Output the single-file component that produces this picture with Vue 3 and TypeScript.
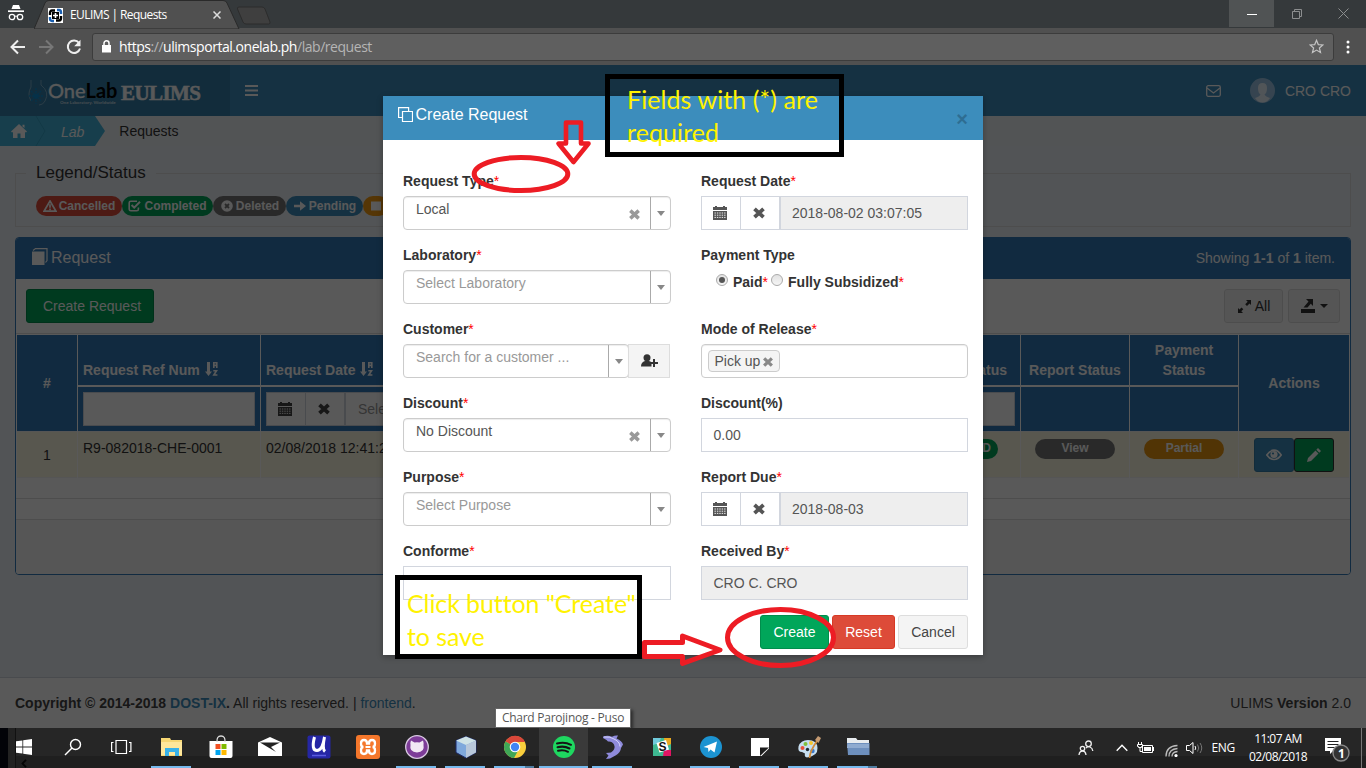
<script setup lang="ts">
interface Field {
  label: string
  req?: boolean
  kind: 'select' | 'date' | 'radio' | 'tags' | 'input'
  value?: string
  placeholder?: string
  clearable?: boolean
  addon?: boolean
  disabled?: boolean
}

const leftFields: Field[] = [
  { label: 'Request Type', req: true, kind: 'select', value: 'Local', clearable: true },
  { label: 'Laboratory', req: true, kind: 'select', placeholder: 'Select Laboratory' },
  { label: 'Customer', req: true, kind: 'select', placeholder: 'Search for a customer ...', addon: true },
  { label: 'Discount', req: true, kind: 'select', value: 'No Discount', clearable: true },
  { label: 'Purpose', req: true, kind: 'select', placeholder: 'Select Purpose' },
  { label: 'Conforme', req: true, kind: 'input', value: '' },
]
const rightFields: Field[] = [
  { label: 'Request Date', req: true, kind: 'date', value: '2018-08-02 03:07:05' },
  { label: 'Payment Type', kind: 'radio' },
  { label: 'Mode of Release', req: true, kind: 'tags', value: 'Pick up' },
  { label: 'Discount(%)', kind: 'input', value: '0.00' },
  { label: 'Report Due', req: true, kind: 'date', value: '2018-08-03' },
  { label: 'Received By', req: true, kind: 'input', value: 'CRO C. CRO', disabled: true },
]
const columns = [leftFields, rightFields]

const legend = [
  { name: 'Cancelled', icon: 'warn', color: '#dd4b39', w: 86 },
  { name: 'Completed', icon: 'check', color: '#00a65a', w: 91 },
  { name: 'Deleted', icon: 'xcircle', color: '#777777', w: 73 },
  { name: 'Pending', icon: 'arrow', color: '#3c8dbc', w: 77 },
  { name: '', icon: 'square', color: '#f39c12', w: 26 },
]

const apps = [
  { id: 'start' }, { id: 'search' }, { id: 'taskview' },
  { id: 'explorer', run: true }, { id: 'store' }, { id: 'mail' }, { id: 'udemy' }, { id: 'xampp' },
  { id: 'github', run: true }, { id: 'cube', run: true }, { id: 'chrome', run: true, multi: true },
  { id: 'spotify', run: true, hot: true }, { id: 'dolphin', run: true }, { id: 'slack' },
  { id: 'telegram', run: true }, { id: 'sticky', run: true }, { id: 'paint', run: true },
  { id: 'folder', run: true, multi: true },
]
</script>

<template>
  <div class="screen">
    <svg class="defs" width="0" height="0">
      <symbol id="i-cal" viewBox="0 0 14 14"><path d="M0 1h2V0h2v1h6V0h2v1h2v3H0zM0 5h14v9H0z" fill="currentColor" /><path d="M1.5 7h11M1.5 9.2h11M1.5 11.4h11" stroke="#fff" stroke-width=".9" stroke-dasharray="1.4 1" /></symbol>
      <symbol id="i-x" viewBox="0 0 14 14"><path d="M2.5 2.8l9 8.4M11.5 2.8l-9 8.4" stroke="currentColor" stroke-width="3.8" /></symbol>
      <symbol id="i-warn" viewBox="0 0 14 12"><path d="M7 1L13 11.2H1z" fill="none" stroke="currentColor" stroke-width="1.7" /><path d="M7 4.2v3.6M7 8.6v1.6" stroke="currentColor" stroke-width="1.7" /></symbol>
      <symbol id="i-check" viewBox="0 0 14 12"><path d="M9 1.2H2.8Q1.2 1.2 1.2 2.8v6.4Q1.2 10.8 2.8 10.8h6Q10.4 10.8 10.4 9.2V7.5" fill="none" stroke="currentColor" stroke-width="1.6" /><path d="M3.6 5l2.6 2.6L12 1.8" fill="none" stroke="currentColor" stroke-width="2" /></symbol>
      <symbol id="i-xcircle" viewBox="0 0 12 12"><circle cx="6" cy="6" r="5.8" fill="currentColor" /><path d="M4 4l4 4M8 4L4 8" stroke="#777" stroke-width="1.8" /></symbol>
      <symbol id="i-arrow" viewBox="0 0 12 12"><path d="M0 4.8h6V1.2L12 6l-6 4.8V7.2H0z" fill="currentColor" /></symbol>
      <symbol id="i-square" viewBox="0 0 10 12"><path d="M0 1.500h10v9H0z" fill="currentColor" /></symbol>
      <symbol id="i-sort" viewBox="0 0 14 16"><path d="M2 1h3v9.500h2L3.500 15 0 10.500h2z" fill="currentColor" /><path d="M8.800 7V1.700h3V7M8.800 4.400h3M8.300 9.700h3.200L8.800 14h3.600" fill="none" stroke="currentColor" stroke-width="1.600" /></symbol>
    </svg>

    <header class="browser">
      <div class="strip">
        <svg class="incog" width="18" height="18" viewBox="0 0 18 18" fill="none" stroke="#fff"><path d="M4.500 5L6 1h6l1.500 4z" fill="#fff" stroke="none" /><path d="M1 7.200h16" stroke-width="1.700" /><circle cx="5" cy="13" r="2.700" stroke-width="1.300" /><circle cx="13" cy="13" r="2.700" stroke-width="1.300" /><path d="M7.500 12.500q1.500-1 3 0" /></svg>
        <div class="tab">
          <svg class="tabbg" width="206" height="29" viewBox="0 0 206 29"><path d="M0 29L11 3Q12 .5 15 .5H189Q192 .5 193 3L205 29z" fill="#505050" stroke="#2a2a2a" /></svg>
          <svg class="fav" width="15" height="15" viewBox="0 0 15 15"><path d="M0 0h15v15H0z" fill="#fff" /><g fill="none" stroke-width="2.400"><path d="M7 2.500H4Q2 2.500 2 5v2" stroke="#000" /><path d="M8 12.500h3q2 0 2-2.500V8" stroke="#000" /><path d="M9 2h2q2 0 2 2.500V6" stroke="#1b5fb0" /><path d="M6 13H4q-2 0-2-2.500V9" stroke="#1b5fb0" /></g><path d="M4 4h7v7H4z" /><path d="M7.500 5v5M5 7.500h5" stroke="#fff" stroke-width="1.600" /></svg>
          <span class="tabname">EULIMS | Requests</span>
          <svg class="tabx" width="8" height="8" viewBox="0 0 8 8"><path d="M.5.5l7 7M7.500.5l-7 7" stroke="#ddd" stroke-width="1.500" /></svg>
        </div>
        <svg class="newtab" width="36" height="19" viewBox="0 0 36 19"><path d="M3 1h23q2 0 3 2l5 13q.5 2-1.500 2H10q-2 0-3-2L1.500 3Q1 1 3 1z" fill="#3f3f3f" stroke="#2c2c2c" /></svg>
        <div class="winbtns">
          <span class="min"><svg width="10" height="10"><path d="M0 5.500h10" stroke="#fff" /></svg></span>
          <span><svg width="10" height="10" fill="none" stroke="#8c8e8f"><path d="M.5 2.500h7v7h-7zM2.500 2.500v-2h7v7h-2" /></svg></span>
          <span><svg width="11" height="11" stroke="#8c8e8f"><path d="M.5.5l10 10M10.500.5l-10 10" /></svg></span>
        </div>
      </div>
      <div class="nav">
        <svg width="16" height="16" viewBox="0 0 16 16" fill="none" stroke="#eee" stroke-width="2"><path d="M15 8H2M8 1.500L1.500 8 8 14.500" /></svg>
        <svg width="16" height="16" viewBox="0 0 16 16" fill="none" stroke="#777" stroke-width="2"><path d="M1 8h13M8 1.500L14.500 8 8 14.500" /></svg>
        <svg width="16" height="16" viewBox="0 0 16 16"><path d="M13 4A6.200 6.200 0 1 0 14 9.500" fill="none" stroke="#eee" stroke-width="2" /><path d="M14.500.8v6.400H8.200z" fill="#eee" /></svg>
        <div class="omni">
          <svg width="9" height="13" viewBox="0 0 9 13"><path d="M0 5h9v7.500H0z" fill="#fff" /><path d="M2 5.500V3.300a2.500 2.500 0 0 1 5 0v2.200" fill="none" stroke="#fff" stroke-width="1.500" /></svg>
          <span class="url"><b>https</b>://<b>ulimsportal.onelab.ph</b>/lab/request</span>
          <svg class="star" width="15" height="15" viewBox="0 0 15 15"><path d="M7.500 1.300l1.800 4.300 4.600.4-3.500 3 1.100 4.500-4-2.400-4 2.400 1.100-4.500-3.500-3 4.600-.4z" fill="none" stroke="#c4c4c4" stroke-width="1.200" /></svg>
        </div>
        <svg class="dots" width="4" height="14" fill="#fff"><circle cx="2" cy="2" r="1.500" /><circle cx="2" cy="7" r="1.500" /><circle cx="2" cy="12" r="1.500" /></svg>
      </div>
    </header>

    <main class="app">
      <div class="topbar">
        <div class="brand">
          <svg width="20" height="28" viewBox="0 0 20 28" fill="none" stroke="#8bb7d1"><path d="M3 1v7Q-1 15 3 22M13 1v5Q22 13 17 22q-2 4-6 4" stroke-width=".8" /><path d="M8 9v16M1 17h14M3 12l10 10M13 12L3 22" stroke="#0f8ed0" stroke-dasharray="2 1" stroke-width="1.300" /><circle cx="8" cy="17" r="2.500" fill="#0f8ed0" stroke="none" /></svg>
          <div class="onelab"><div class="ol">One<i>Lab</i></div><small>One Laboratory. Worldwide</small></div>
          <span class="eulims">EULIMS</span>
        </div>
        <svg class="burger" width="13" height="11"><path d="M0 1h13M0 5.500h13M0 10h13" stroke="#fff" stroke-width="1.800" /></svg>
        <div class="user">
          <svg width="15" height="12" viewBox="0 0 15 12" fill="none" stroke="#fff" stroke-width="1.300"><rect x=".7" y=".7" width="13.600" height="10.600" rx="1.500" /><path d="M1 3l6.500 5L14 3" /></svg>
          <svg class="ava" width="25" height="25" viewBox="0 0 25 25"><circle cx="12.500" cy="12.500" r="12.500" fill="#9cc4e4" /><path d="M12.500 5q4.500 0 4.500 5t-2.500 6.500q1 2 5.500 3.500-3 4.500-7.500 4.500T5 20q4.500-1.500 5.500-3.500Q8 15 8 10t4.500-5z" fill="#e9f3fb" /></svg>
          <span>CRO CRO</span>
        </div>
      </div>
      <div class="crumbs">
        <svg class="crumbbg" width="106" height="30"><path d="M0 0h95l10 15-10 15H0z" fill="#44b3d9" /><path d="M36 0l9 15-9 15" fill="none" stroke="#35a0c6" /></svg>
        <svg class="home" width="16" height="14" viewBox="0 0 16 14"><path d="M8 0l8 7.500-1 1L14 8v6H9.500V9.500h-3V14H2V8l-1 .5-1-1zM11.500.8h2V4l-2-1.500z" fill="#fff" /></svg>
        <em>Lab</em><span>Requests</span>
      </div>

      <fieldset class="legend">
        <legend>Legend/Status</legend>
        <div class="pills">
          <span v-for="l in legend" :key="l.icon" class="pill" :style="{ background: l.color, width: l.w + 'px' }">
            <svg width="14" height="12"><use :href="'#i-' + l.icon" /></svg>{{ l.name }}
          </span>
        </div>
      </fieldset>

      <section class="panel">
        <div class="phead">
          <svg width="16" height="17" viewBox="0 0 16 17"><path d="M0 3.500h12.500V17H0z" fill="#fff" /><path d="M1 2.500L3.500.6H15v12L13.500 14.500" fill="none" stroke="#fff" stroke-width="1.200" /></svg>
          <span class="ptitle">Request</span>
          <span class="showing">Showing <b>1-1</b> of <b>1</b> item.</span>
        </div>
        <div class="ptools">
          <button class="btn green wide">Create Request</button>
          <div class="grow"></div>
          <button class="btn gray all"><svg width="15" height="15" viewBox="0 0 15 15"><path d="M9 1h5v5l-1.500-1.500L10 7 8.200 5.200l2.500-2.500zM1 14V9l1.500 1.500L4.500 8.500l1.800 1.800-2 2L6 14z" fill="#333" /></svg>All</button>
          <button class="btn gray exp"><svg width="14" height="14" viewBox="0 0 14 14"><path d="M0 10h14v4H0z" fill="#333" /><path d="M5 0h7v7L9.800 4.800 6.500 8.500H2.500L7.500 2.500z" fill="#333" /></svg><i class="caret"></i></button>
        </div>
        <div class="table">
          <div class="th span">#</div>
          <div class="th left">Request Ref Num <svg width="14" height="16"><use href="#i-sort" /></svg></div>
          <div class="th left">Request Date <svg width="14" height="16"><use href="#i-sort" /></svg></div>
          <div class="th"></div>
          <div class="th right">Status</div>
          <div class="th">Report Status</div>
          <div class="th">Payment<br>Status</div>
          <div class="th span">Actions</div>
          <div class="tf"><div class="box"></div></div>
          <div class="tf"><div class="dategroup"><span class="cell"><svg width="14" height="14"><use href="#i-cal" /></svg></span><span class="cell"><svg width="14" height="14"><use href="#i-x" /></svg></span><span class="val">Sele</span></div></div>
          <div class="tf"><div class="box"></div></div>
          <div class="tf"><div class="box"></div></div>
          <div class="tf"></div>
          <div class="tf"></div>
          <div class="td mid">1</div>
          <div class="td">R9-082018-CHE-0001</div>
          <div class="td">02/08/2018 12:41:2</div>
          <div class="td"></div>
          <div class="td paid"><span class="badge g">D</span></div>
          <div class="td c"><span class="badge">View</span></div>
          <div class="td c"><span class="badge o">Partial</span></div>
          <div class="td acts">
            <span class="act blue"><svg width="16" height="12" viewBox="0 0 16 12"><path d="M.8 6Q4 1.200 8 1.200T15.200 6Q12 10.500 8 10.500T.8 6z" fill="none" stroke="#fff" stroke-width="1.700" /><circle cx="8" cy="5.500" r="3.600" fill="#fff" /><circle cx="7" cy="4.500" r="1.100" fill="#3c8dbc" /></svg></span>
            <span class="act green"><svg width="14" height="14" viewBox="0 0 14 14"><path d="M0 14l1-4 7.500-7.500 3 3L4 13zM9.300 1.700L11 0l3 3-1.700 1.700z" fill="#fff" /></svg></span>
          </div>
        </div>
        <div class="blank"></div>
        <div class="blank"></div>
        <div class="pfoot"></div>
      </section>

      <footer class="foot">
        <span><b>Copyright © 2014-2018 <a>DOST-IX</a>.</b> All rights reserved. | <a>frontend</a>.</span>
        <span>ULIMS <b>Version</b> 2.0</span>
      </footer>
      <div class="backdrop"></div>
    </main>

    <div class="modal">
      <div class="mhead">
        <svg width="15" height="15" viewBox="0 0 15 15" fill="none" stroke="#fff" stroke-width="1.200"><path d="M4.500 4.500h10v10h-10zM4 10.500H.6V.6h10V4" /></svg>
        <span>Create Request</span>
        <b class="close">×</b>
      </div>
      <div class="mbody">
        <div v-for="(col, ci) in columns" :key="ci" class="mcol">
          <div v-for="f in col" :key="f.label" class="field">
            <label>{{ f.label }}<i v-if="f.req">*</i></label>
            <div v-if="f.kind === 'select'" class="selrow">
              <div class="select">
                <span class="sv" :class="{ ph: f.placeholder }">{{ f.value || f.placeholder }}</span>
                <svg v-if="f.clearable" class="clr" width="13" height="13"><use href="#i-x" /></svg>
                <span class="drop"><i></i></span>
              </div>
              <div v-if="f.addon" class="addon"><svg width="17" height="14" viewBox="0 0 17 14"><circle cx="6" cy="3.800" r="3.500" fill="#333" /><path d="M0 12.500q0-4.500 4-5.500h4q2.500.8 2.500 1.800V12.500z" fill="#333" /><path d="M13 5v8M9.500 9H17" stroke="#333" stroke-width="2" /></svg></div>
            </div>
            <div v-else-if="f.kind === 'date'" class="dategroup">
              <span class="cell"><svg width="14" height="14"><use href="#i-cal" /></svg></span>
              <span class="cell"><svg width="14" height="14"><use href="#i-x" /></svg></span>
              <span class="val dis">{{ f.value }}</span>
            </div>
            <div v-else-if="f.kind === 'radio'" class="radios">
              <span class="radio on"></span><b>Paid<i>*</i></b><span class="radio"></span><b class="fs">Fully Subsidized<i>*</i></b>
            </div>
            <div v-else-if="f.kind === 'tags'" class="tags"><span class="tag">{{ f.value }}<svg width="12" height="12"><use href="#i-x" /></svg></span></div>
            <div v-else class="input" :class="{ dis: f.disabled }">{{ f.value }}</div>
          </div>
        </div>
      </div>
      <div class="mfoot">
        <button class="btn green">Create</button>
        <button class="btn red">Reset</button>
        <button class="btn gray">Cancel</button>
      </div>
    </div>

    <svg class="marks" width="1366" height="768" fill="none" stroke="#ed1c24" stroke-width="5" stroke-linejoin="round">
      <path d="M566 122.500H581V143.500H588.500L573.500 162 558.500 143.500H566z" stroke-width="4.600" />
      <ellipse cx="521" cy="174" rx="46.800" ry="16.500" />
      <path d="M644.500 642.500H682.500V636L720 650 682.500 663.500V656.500H644.500z" />
      <ellipse cx="780.500" cy="637.500" rx="53" ry="28" />
    </svg>
    <div class="note n1">Fields with (*) are<br>required</div>
    <div class="note n2">Click button "Create"<br>to save</div>

    <div class="tooltip">Chard Parojinog - Puso</div>

    <div class="taskbar">
      <span class="edge"></span>
      <svg class="scroll" width="6" height="9" viewBox="0 0 6 9"><path d="M5 .8L1.500 4.500 5 8.200" fill="none" stroke="#050505" stroke-width="1.800" /></svg>
      <div class="apps">
        <div v-for="a in apps" :key="a.id" class="appi" :class="[a.id, { run: a.run, hot: a.hot, multi: a.multi }]">
          <svg width="24" height="24" viewBox="0 0 24 24">
            <g v-if="a.id === 'start'" fill="#fff"><path d="M4 6.300l6.400-.9v6.200H4zM11.200 5.300L20 4v7.600h-8.800zM4 12.400h6.400v6.200L4 17.700zM11.200 12.400H20V20l-8.800-1.300z" /></g>
            <g v-else-if="a.id === 'search'" fill="none" stroke="#fff" stroke-width="1.400"><circle cx="14.500" cy="9.500" r="5" /><path d="M11 13l-7 7" /></g>
            <g v-else-if="a.id === 'taskview'" fill="none" stroke="#fff" stroke-width="1.200"><path d="M6 5.500h10.500v13H6zM3.500 7.500H1.600v9h1.900M19 7.500h1.900v9H19" /></g>
            <g v-else-if="a.id === 'explorer'"><path d="M1 3h9l1 2h11v16H1z" fill="#f7d774" /><path d="M1 7h21v13H1z" fill="#ffe79b" /><path d="M5 13h14v8h-4v-4H9v4H5z" fill="#39b2e9" /></g>
            <g v-else-if="a.id === 'store'"><path d="M.5 6h23v15q0 2-2 2h-19q-2 0-2-2z" fill="#fff" /><path d="M8 7q-.5-6 4-6t4 6" fill="none" stroke="#ddd" stroke-width="1.300" /><path d="M6.500 9h5v5h-5z" fill="#f25022" /><path d="M12.500 9h5v5h-5z" fill="#7fba00" /><path d="M6.500 15h5v5h-5z" fill="#00a4ef" /><path d="M12.500 15h5v5h-5z" fill="#ffb900" /></g>
            <g v-else-if="a.id === 'mail'"><path d="M0 7.500L12 2l12 5.500V21H0z" fill="#fff" /><path d="M2 7.500h20L13 12l5 5z" fill="#222" /></g>
            <g v-else-if="a.id === 'udemy'"><rect x=".5" y=".5" width="23" height="23" rx="2" fill="#2526a4" /><path d="M7.500 2Q4 15.500 10 15.500 15.500 15.500 17.500 2M17.500 2q-2.500 12 .5 14.500" fill="none" stroke="#fff" stroke-width="3" /><path d="M5 20.500h14" stroke="#5b5ce0" stroke-width="1.500" /></g>
            <g v-else-if="a.id === 'xampp'"><rect width="24" height="24" rx="3" fill="#f5772b" /><path d="M8 5q3 0 3 3.500h2Q13 5 16 5t3 3.500-2.500 3.500Q19 12 19 15.500T16 19t-3-3.500h-2Q11 19 8 19t-3-3.500T7.500 12Q5 12 5 8.500T8 5z" fill="none" stroke="#fff" stroke-width="2.300" /><path d="M9.500 12h5" stroke="#fff" stroke-width="2" /></g>
            <g v-else-if="a.id === 'github'"><circle cx="12" cy="12" r="11.300" fill="#7d3c98" stroke="#d9c9e2" stroke-width="1.300" /><path d="M6 5.500l3.500 2q2.500-.5 5 0l3.500-2q1 3 .5 4.500 1.500 7-6.500 7.500-8-.5-6.500-7.500Q5 8 6 5.500z" fill="#f2e8f4" /></g>
            <g v-else-if="a.id === 'cube'"><path d="M12 1.500l10 4v12L12 23 2 17.500v-12z" fill="#7fa9dc" stroke="#1d2b6b" /><path d="M12 1.500l10 4-10 4.500L2 5.500z" fill="#cfe3e6" /><path d="M12 10l10-4.500v12L12 23z" fill="#b8c8da" /></g>
            <g v-else-if="a.id === 'chrome'"><circle cx="12" cy="12" r="11" fill="#f9ce3c" /><path d="M12 12L2.500 6.500A11 11 0 0 1 22 7H12z" fill="#d9473a" /><path d="M12 12L2.500 6.500A11 11 0 0 0 11 23l5-9z" fill="#3fa757" /><circle cx="12" cy="12" r="5.300" fill="#fff" /><circle cx="12" cy="12" r="4.200" fill="#4285f4" /></g>
            <g v-else-if="a.id === 'spotify'"><circle cx="12" cy="12" r="11" fill="#1ed760" /><path d="M5 8.500q7.500-2.200 14 1.300M5.500 12.300q6.500-1.800 12 1.200M6 15.800q5.500-1.500 10 1" fill="none" stroke="#151515" stroke-width="2" stroke-linecap="round" /></g>
            <g v-else-if="a.id === 'dolphin'"><path d="M2 1.500q5-1.500 9 .3Q14 0 17 .5l-1.500 3Q21 6 22 9.500L20 13q-.5 5-5.500 7.500L9 23.500l-4 .5 2.500-3.500L5 18l5-.5q5-3.500 3-8Q11 6 7 6.500L5.500 5 2 3z" fill="#8f8bdc" /><path d="M3 2q6-.5 9 1.500 7 3 7 8" fill="none" stroke="#d5d5fa" /></g>
            <g v-else-if="a.id === 'slack'"><path d="M3 3h18v18H3z" fill="#3eb991" /><path d="M14 3h7v6l-6 3z" fill="#e9a820" /><path d="M21 15v6h-8l1-6z" fill="#e01563" /><path d="M3 3h8l-2 5-6 2z" fill="#70cadb" /><path d="M6.500 8l9.500-3 3 9.500-9.500 3z" fill="#fff" /><text x="8.500" y="16" font-size="12" font-weight="bold" font-family="Liberation Sans, sans-serif" fill="#111">S</text></g>
            <g v-else-if="a.id === 'telegram'"><circle cx="12" cy="12" r="11" fill="#1c93d1" /><path d="M4.500 12L18 6.500l-2.500 11-4-3-2 2.500-.5-4z" fill="#fff" /></g>
            <g v-else-if="a.id === 'sticky'"><path d="M3 3h18v18H3z" fill="#fff" /><path d="M12 12.500h9L12 21z" fill="#1d1d1d" /><path d="M13.500 21L21 13.500V21z" fill="#262626" /></g>
            <g v-else-if="a.id === 'paint'"><path d="M11 5q9 0 9.500 8T10 22.500Q7 22 8 18.500L5 17Q.5 17 1.500 11.500 3.500 5 11 5z" fill="#c6def0" /><circle cx="5.500" cy="13" r="2" fill="#e9503b" /><circle cx="8.500" cy="9" r="2" fill="#7fbf3c" /><circle cx="14" cy="8" r="2" fill="#f5c52e" /><circle cx="15.500" cy="16" r="2.200" fill="#3b78c8" /><circle cx="10.500" cy="14.500" r="1.700" fill="#1f2a33" /><path d="M12.500 23Q13 16 20 6" stroke="#d08b3c" stroke-width="1.800" fill="none" /><path d="M18 5l3-4 3 2-2.500 5z" fill="#c49a72" /></g>
            <g v-else><path d="M1 3h9l1.500 2H23v8H1z" fill="#e8ecef" /><path d="M1 8h22.500v12H2z" fill="#6d8fbd" /><path d="M2 9h21v4H2z" fill="#8fabd0" /></g>
          </svg>
        </div>
      </div>
      <div class="tray">
        <svg class="t1" width="16" height="16" viewBox="0 0 16 16" fill="none" stroke="#eee" stroke-width="1.300"><circle cx="10.500" cy="3.800" r="2.800" /><circle cx="4.500" cy="8.500" r="2.200" /><path d="M1 15q.5-4 3.500-4T8 15M8 8q2-2 4-1 2.500 1 2.800 4" /></svg>
        <svg class="t2" width="12" height="8" fill="none" stroke="#fff" stroke-width="1.400"><path d="M.7 6.800L6 1.200l5.300 5.600" /></svg>
        <svg class="t3" width="17" height="12" viewBox="0 0 17 12" fill="none" stroke="#fff"><path d="M5.500 3.500h10v7h-10z" /><path d="M7 5h7v4H7z" fill="#fff" stroke="none" /><path d="M16.500 5v4M1.500 0v2M4.500 0v2M.5 2.500h5v2h-1v1h-3v-1h-1zM3 6v3.500h2" /></svg>
        <svg class="t4" width="13" height="13" viewBox="0 0 13 13" fill="none" stroke="#bbb" stroke-width="1.300"><path d="M1 12.500Q1 2 12.500 1.500M4 12.500Q4 5 12.500 4.500M7 12.500Q7 8 12.500 7.500" /><circle cx="11" cy="11.500" r="1.600" fill="#fff" stroke="none" /></svg>
        <svg class="t5" width="17" height="14" viewBox="0 0 17 14" fill="none" stroke="#fff"><path d="M.5 4.500h3l3.500-3v11l-3.500-3h-3zM9 5q1.500 2 0 4" /><path d="M11.500 3.500q2.500 3.500 0 7M14 2q3.500 5 0 10" stroke="#777" /></svg>
        <span class="eng">ENG</span>
        <div class="clock"><span>11:07 AM</span><span>02/08/2018</span></div>
        <svg class="act-c" width="26" height="26" viewBox="0 0 26 26"><path d="M1 1h16v13H9l-3 3v-3H1z" fill="#fff" /><path d="M3.500 4.500h11M3.500 7.500h11M3.500 10.500h7" stroke="#222" /><circle cx="17" cy="16" r="8" fill="#333" stroke="#888" stroke-width="1.400" /><text x="14" y="20.500" font-size="12" font-weight="bold" font-family="Open Sans, sans-serif" fill="#fff">1</text></svg>
      </div>
      <span class="peek"></span>
    </div>
  </div>
</template>

<style>
body { margin: 0; overflow: hidden; }
</style>

<style scoped>
* { box-sizing: border-box; }
.screen { position: relative; width: 1366px; height: 768px; overflow: hidden; font: 14px/20px "Liberation Sans", Arial, sans-serif; color: #333; background: #505050; display: flex; flex-direction: column; }
.defs { position: absolute; }
svg { display: block; flex: none; }
button { font: inherit; margin: 0; }

.browser { height: 65px; flex: none; font-family: "Open Sans", "Noto Sans", sans-serif; }
.strip { height: 28px; background: #35393b; display: flex; align-items: flex-start; }
.incog { margin: 4px 0 0 7px; }
.tab { position: relative; width: 206px; height: 28px; margin-left: 9px; display: flex; align-items: center; padding: 2px 0 0 14px; color: #fff; }
.tabbg { position: absolute; left: 0; top: 0; }
.fav, .tabname, .tabx { position: relative; }
.tabname { margin-left: 7px; font-size: 12px; letter-spacing: -.58px; width: 143px; white-space: nowrap; }
.newtab { margin: 6px 0 0 -4px; }
.winbtns { margin-left: auto; display: flex; }
.winbtns span { width: 46px; height: 27px; display: flex; align-items: center; justify-content: center; }
.winbtns span.min { background: #505354; width: 45px; }
.nav { height: 37px; background: #505050; display: flex; align-items: center; padding: 0 16px 0 10px; gap: 12px; }
.omni { flex: 1; margin-left: -2px; height: 28px; background: #5f5f5f; border: 1px solid #3c3c3c; border-radius: 3px; display: flex; align-items: center; padding: 0 9px 0 9px; }
.url { margin-left: 8px; color: #b5b5b5; font-size: 14px; letter-spacing: -.46px; }
.url b { font-weight: 400; color: #fff; }
.star { margin-left: auto; }

.app { position: relative; height: 663px; flex: none; background: #ecf0f5; display: flex; flex-direction: column; }
.backdrop { position: absolute; inset: 0; background: rgba(0, 0, 0, .65); }
.topbar { height: 51px; background: #3c8dbc; display: flex; align-items: center; flex: none; color: #fff; }
.brand { width: 230px; height: 51px; background: #367fa9; display: flex; align-items: center; padding: 4px 0 0 28px; }
.onelab { width: 70px; }
.ol { font: 400 20px/20px Lato, sans-serif; white-space: nowrap; -webkit-text-stroke: .3px #fff; }
.ol i { font-style: normal; font-weight: 700; color: #000; -webkit-text-stroke: 0; }
.onelab small { display: block; font: 700 4.5px/6px Lato, sans-serif; margin-left: 12px; white-space: nowrap; opacity: .7; }
.eulims { font: 700 21px/24px "Liberation Serif", serif; margin-left: 3px; letter-spacing: -.6px; -webkit-text-stroke: .5px #fff; }
.burger { margin-left: 15px; }
.user { margin-left: auto; display: flex; align-items: center; padding-right: 15px; }
.ava { margin: 0 10px 0 29px; }
.crumbs { height: 30px; position: relative; display: flex; align-items: center; background: #eceff2; flex: none; }
.crumbbg { position: absolute; left: 0; top: 0; }
.home { position: relative; margin-left: 11px; }
.crumbs em { position: relative; color: #fff; margin-left: 34px; padding-top: 1px; }
.crumbs span { margin-left: 35px; color: #333; }

.legend { margin: 17px 15px 0; padding: 0 20px; border: 1px solid #ddd; height: 64px; flex: none; min-width: 0; }
.legend legend { font-size: 17px; line-height: 20px; padding: 0 10px; margin-left: -10px; }
.pills { display: flex; margin-top: 13px; }
.pill { height: 20px; border-radius: 10px; color: #fff; font: 700 12px/20px "Liberation Sans", sans-serif; display: flex; align-items: center; gap: 2px; justify-content: center; }

.panel { margin: 10px 15px 0; height: 338px; border: 1px solid #337ab7; border-radius: 4px; background: #fff; flex: none; overflow: hidden; }
.phead { height: 41px; background: #337ab7; color: #fff; display: flex; align-items: center; padding: 0 15px 1px 16px; }
.phead svg { margin-top: -3px; }
.ptitle { font-size: 16px; margin-left: 3px; }
.showing { margin-left: auto; }
.ptools { height: 55px; display: flex; align-items: flex-start; padding: 10px 10px 0; border-bottom: 1px solid #ddd; }
.grow { flex: 1; }
.btn { height: 34px; border: 1px solid; border-radius: 3px; padding: 0 12px; font-size: 14px; display: flex; align-items: center; justify-content: center; color: #fff; white-space: nowrap; }
.green { background: #00a65a; border-color: #008d4c; }
.red { background: #dd4b39; border-color: #d73925; }
.gray { background: #f4f4f4; border-color: #ddd; color: #444; }
.wide { width: 128px; padding-left: 16px; }
.all { width: 59px; padding: 0; gap: 3px; margin-right: 5px; color: #333; }
.exp { width: 52px; padding: 0; gap: 5px; }
.caret { border: 4px solid transparent; border-top-color: #333; border-bottom: 0; }
.table { display: grid; grid-template-columns: 60px 182px 239px 399px 119px 108px 108px 110px; grid-template-rows: 50px 46px 47px; column-gap: 1px; padding: 1px 0 0 1px; background: #fff; color: #333; }
.th { background: #337ab7; color: #fff; font-weight: 700; display: flex; align-items: flex-end; justify-content: center; padding: 5px; text-align: center; }
.th.span { grid-row: span 2; align-items: center; padding: 0 5px 1px; }
.th.left { justify-content: flex-start; }
.th.right { justify-content: flex-end; padding-right: 13px; }
.th svg { margin: 0 0 3px 5px; }
.tf { background: #337ab7; border-top: 2px solid #fff; padding: 5px; height: 46px; }
.box { height: 34px; background: #fff; border: 1px solid #d2d6de; }
.dategroup { display: flex; height: 34px; border: 1px solid #d2d6de; background: #fff; }
.dategroup .cell { width: 39px; border-right: 1px solid #d2d6de; display: flex; align-items: center; justify-content: center; color: #555; padding-right: 2px; }
.tf .cell { color: #444; }
.dategroup .val { flex: 1; padding: 0 11px; line-height: 33px; color: #999; border-left: 1px solid #d2d6de; }
.tf .val { padding-left: 12px; }
.dategroup .dis { background: #eee; color: #555; }
.td { background: #fcf8e3; padding: 6px 5px; border-top: 1px solid #f4f4f4; border-bottom: 1px solid #f4f4f4; white-space: nowrap; }
.td.mid { display: flex; align-items: center; justify-content: center; padding-top: 7px; }
.td.c { display: flex; justify-content: center; padding-top: 7px; }
.td.paid { display: flex; justify-content: flex-end; padding: 7px 22px 0 0; }
.badge { width: 80px; height: 20px; border-radius: 10px; background: #777; color: #fff; font: 700 12px/18px "Liberation Sans", sans-serif; text-align: center; }
.badge.g { background: #00a65a; text-align: right; padding-right: 7px; }
.badge.o { background: #e8940f; }
.acts { display: flex; justify-content: center; padding: 6px 0; }
.act { width: 40px; height: 34px; border-radius: 3px; display: flex; align-items: center; justify-content: center; border: 1px solid; }
.act.blue { background: #3c8dbc; border-color: #367fa9; }
.blank { height: 21px; border-bottom: 1px solid #ddd; }
.pfoot { height: 60px; background: #f7f7f7; }
.foot { position: absolute; left: 0; right: 0; bottom: 0; height: 51px; background: #fff; border-top: 1px solid #d2d6de; padding: 0 15px; display: flex; justify-content: space-between; align-items: center; color: #444; }
.foot a { color: #3c8dbc; }

.modal { position: absolute; left: 383px; top: 96px; width: 600px; height: 559px; background: #fff; box-shadow: 0 2px 6px rgba(0, 0, 0, .3); }
.mhead { height: 44px; background: #3c8dbc; color: #fff; font-size: 16px; display: flex; align-items: center; padding: 0 15px 7px; gap: 2.5px; }
.close { margin-left: auto; font-size: 20px; line-height: 20px; opacity: .22; color: #000; padding-top: 9px; }
.mbody { display: flex; gap: 30px; padding: 31px 15px 0 20px; }
.mcol { width: 268px; }
.mcol + .mcol { width: 267px; }
.field { height: 74px; }
.field label { display: block; font-weight: 700; height: 25px; line-height: 20px; }
.field i { color: #f00; font-style: normal; font-weight: 400; }
.selrow { display: flex; }
.select { flex: 1; height: 34px; border: 1px solid #ccc; border-radius: 4px; display: flex; box-shadow: inset 0 1px 1px rgba(0, 0, 0, .075); }
.sv { padding: 2px 12px; flex: 1; color: #555; line-height: 20px; white-space: nowrap; }
.sv.ph { color: #999; }
.clr { margin: 11px 9px 0 0; color: #999; }
.drop { width: 20px; border-left: 1px solid #aaa; display: flex; align-items: center; justify-content: center; }
.drop i { border: 4px solid transparent; border-top: 5px solid #888; border-bottom: 0; }
.addon { width: 42px; height: 34px; margin: 0 1px 0 -1px; border: 1px solid #ddd; background: #f4f4f4; display: flex; align-items: center; justify-content: center; }
.radios { display: flex; align-items: flex-start; padding: 2px 0 0 15px; }
.radios b { margin: 0 4px 0 5px; white-space: nowrap; }
.radios b + .radio { margin-left: -1px; }
.radios b.fs { margin-left: 5px; }
.radio { width: 12px; height: 12px; margin-top: 2px; border: 1px solid #aaa; border-radius: 50%; background: linear-gradient(#e2e2e2, #f5f5f5); display: flex; align-items: center; justify-content: center; }
.radio.on::after { content: ""; width: 6px; height: 6px; border-radius: 50%; background: #555; }
.tags { height: 34px; border: 1px solid #ccc; border-radius: 4px; padding: 5px 6px; box-shadow: inset 0 1px 1px rgba(0, 0, 0, .075); }
.tag { display: inline-flex; align-items: center; height: 22px; border: 1px solid #ccc; border-radius: 4px; background: #f4f4f4; color: #555; padding: 0 5px 0 5.5px; gap: 2px; }
.tag svg { color: #888; margin-top: 1px; }
.input { height: 34px; border: 1px solid #d2d6de; padding: 0 11.500px; line-height: 33px; color: #555; }
.input.dis { background: #eee; }
.mfoot { display: flex; justify-content: flex-end; padding-right: 15px; gap: 3px; }
.mfoot .btn { padding: 0; width: 63px; }
.mfoot .btn:first-child { width: 69px; }
.mfoot .btn:last-child { width: 70px; }

.marks { position: absolute; left: 0; top: 0; }
.note { position: absolute; border: 5px solid #000; color: #fff200; font: 25px/33px Lato, "Open Sans", sans-serif; white-space: nowrap; }
.n1 { left: 605px; top: 74px; width: 239px; height: 83px; padding: 4px 0 0 17px; letter-spacing: .08px; }
.n2 { left: 395px; top: 575px; width: 247px; height: 84px; padding: 7px 0 0 7px; letter-spacing: -.1px; }

.tooltip { position: absolute; left: 495px; top: 708px; width: 136px; height: 20px; background: #fff; border: 1px solid #666; font: 12px/18px "Open Sans", sans-serif; letter-spacing: -.25px; color: #575757; text-align: center; white-space: nowrap; box-shadow: 2px 2px 3px rgba(0, 0, 0, .5); }

.taskbar { height: 40px; background: linear-gradient(#262626 28px, #1f1f1f 28px); display: flex; position: relative; color: #fff; font-family: "Open Sans", sans-serif; }
.edge { width: 16px; background: linear-gradient(90deg, #020308 8px, #222 8px, #222 15px, #111 15px); }
.scroll { position: absolute; left: 21px; top: 31px; }
.peek { position: absolute; right: 4px; top: 0; width: 1px; height: 40px; background: #777; }
.apps { display: flex; }
.appi { width: 49px; height: 40px; display: flex; justify-content: center; align-items: center; border-bottom: 2px solid transparent; position: relative; }
.appi.start { width: 32px; justify-content: flex-start; }
.appi.start svg { margin-left: -4px; }
.appi.taskview { width: 50px; }
.appi.run::after { content: ""; position: absolute; left: 4px; width: 40px; bottom: -2px; height: 2px; background: #76b9ed; }
.appi.multi::after { background: linear-gradient(90deg, #76b9ed 31px, #4f7ca0 31px); }
.appi.hot { background: #3a3a3a; }
.appi.hot::after { left: 0; width: 49px; }
.tray { margin-left: auto; display: flex; align-items: center; font-size: 12px; }
.t1 { margin-right: 22px; }
.t2 { margin-right: 9px; }
.t3 { margin-right: 11px; }
.t4 { margin-right: 8px; margin-top: 4px; }
.t5 { margin-right: 8px; }
.eng { margin-right: 13px; letter-spacing: -.3px; }
.clock { width: 60px; display: flex; flex-direction: column; align-items: center; line-height: 18px; letter-spacing: -.55px; margin-right: 16px; white-space: nowrap; }
.act-c { margin: 3px 16px 0 0; }
</style>
